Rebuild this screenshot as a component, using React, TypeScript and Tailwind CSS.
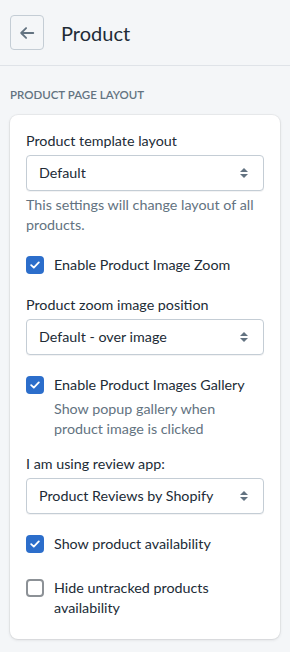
import React from "react";

const font = { fontFamily: '"Segoe UI", Lato, "Noto Sans", sans-serif' };

function SelectBox({ value }: { value: string }) {
  return (
    <div className="mt-[4px] flex h-9 items-center justify-between rounded-[4px] border border-[#c4cdd5] bg-white pl-3 pr-[14px] shadow-[0_1px_0_rgba(22,29,37,0.05)]">
      <span className="text-[14.3px] text-[#212b36]">{value}</span>
      <svg width="10" height="14" viewBox="0 0 10 14" className="text-[#637381]">
        <path d="M5 2 L9 6 H1 Z" fill="currentColor" />
        <path d="M5 12 L9 8 H1 Z" fill="currentColor" />
      </svg>
    </div>
  );
}

function Check({ checked, label, help }: { checked: boolean; label: string; help?: string }) {
  return (
    <div className="flex items-start gap-[10px]">
      <div
        className={
          checked
            ? "mt-[1px] flex h-[18px] w-[18px] shrink-0 items-center justify-center rounded-[4px] bg-[#2c6ecb]"
            : "mt-[1px] h-[18px] w-[18px] shrink-0 rounded-[4px] border-2 border-[#8c9196] bg-white"
        }
      >
        {checked && (
          <svg width="10" height="8" viewBox="0 0 10 8">
            <path d="M1.2 4.2 L3.8 6.6 L8.8 1.4" fill="none" stroke="white" strokeWidth="1.8" strokeLinecap="round" strokeLinejoin="round" />
          </svg>
        )}
      </div>
      <div className="text-[14.3px] leading-5">
        <div className="text-[#212b36]">{label}</div>
        {help && <div className="mt-[4px] text-[#637381]">{help}</div>}
      </div>
    </div>
  );
}

export default function App() {
  return (
    <div className="min-h-[652px] w-[290px] bg-[#f4f6f8]" style={font}>
      <div className="flex h-[66px] items-center gap-[17px] border-b border-[#dfe3e8] px-[10px]">
        <button className="flex h-[35px] w-[34px] items-center justify-center rounded-[4px] border border-[#c4cdd5] bg-[#f4f6f8]">
          <svg width="18" height="18" viewBox="0 0 20 20" className="text-[#637381]">
            <path d="M17 10 H3.5 M9 4.5 L3.5 10 L9 15.5" fill="none" stroke="currentColor" strokeWidth="2" strokeLinecap="round" strokeLinejoin="round" />
          </svg>
        </button>
        <h1 className="text-[20px] text-[#212b36]">Product</h1>
      </div>

      <div className="px-[10px] pt-[21px]">
        <h2 className="text-[11.5px] font-semibold uppercase leading-4 text-[#637381]">Product page layout</h2>
        <div className="mt-[12px] rounded-[8px] bg-white px-[16px] pb-[21px] pt-[16px] shadow-[0_0_0_1px_rgba(63,63,68,0.05),0_1px_3px_0_rgba(63,63,68,0.15)]">
          <div className="text-[14.3px] leading-5 text-[#212b36]">Product template layout</div>
          <SelectBox value="Default" />
          <p className="mt-[4px] text-[14.3px] leading-5 text-[#637381]">This settings will change layout of all products.</p>

          <div className="mt-[20px]">
            <Check checked label="Enable Product Image Zoom" />
          </div>

          <div className="mt-[20px] text-[14.3px] leading-5 text-[#212b36]">Product zoom image position</div>
          <SelectBox value="Default - over image" />

          <div className="mt-[20px]">
            <Check checked label="Enable Product Images Gallery" help="Show popup gallery when product image is clicked" />
          </div>

          <div className="mt-[15px] text-[14.3px] leading-5 text-[#212b36]">I am using review app:</div>
          <SelectBox value="Product Reviews by Shopify" />

          <div className="mt-[20px]">
            <Check checked label="Show product availability" />
          </div>

          <div className="mt-[24px]">
            <Check checked={false} label="Hide untracked products availability" />
          </div>
        </div>
      </div>
    </div>
  );
}
